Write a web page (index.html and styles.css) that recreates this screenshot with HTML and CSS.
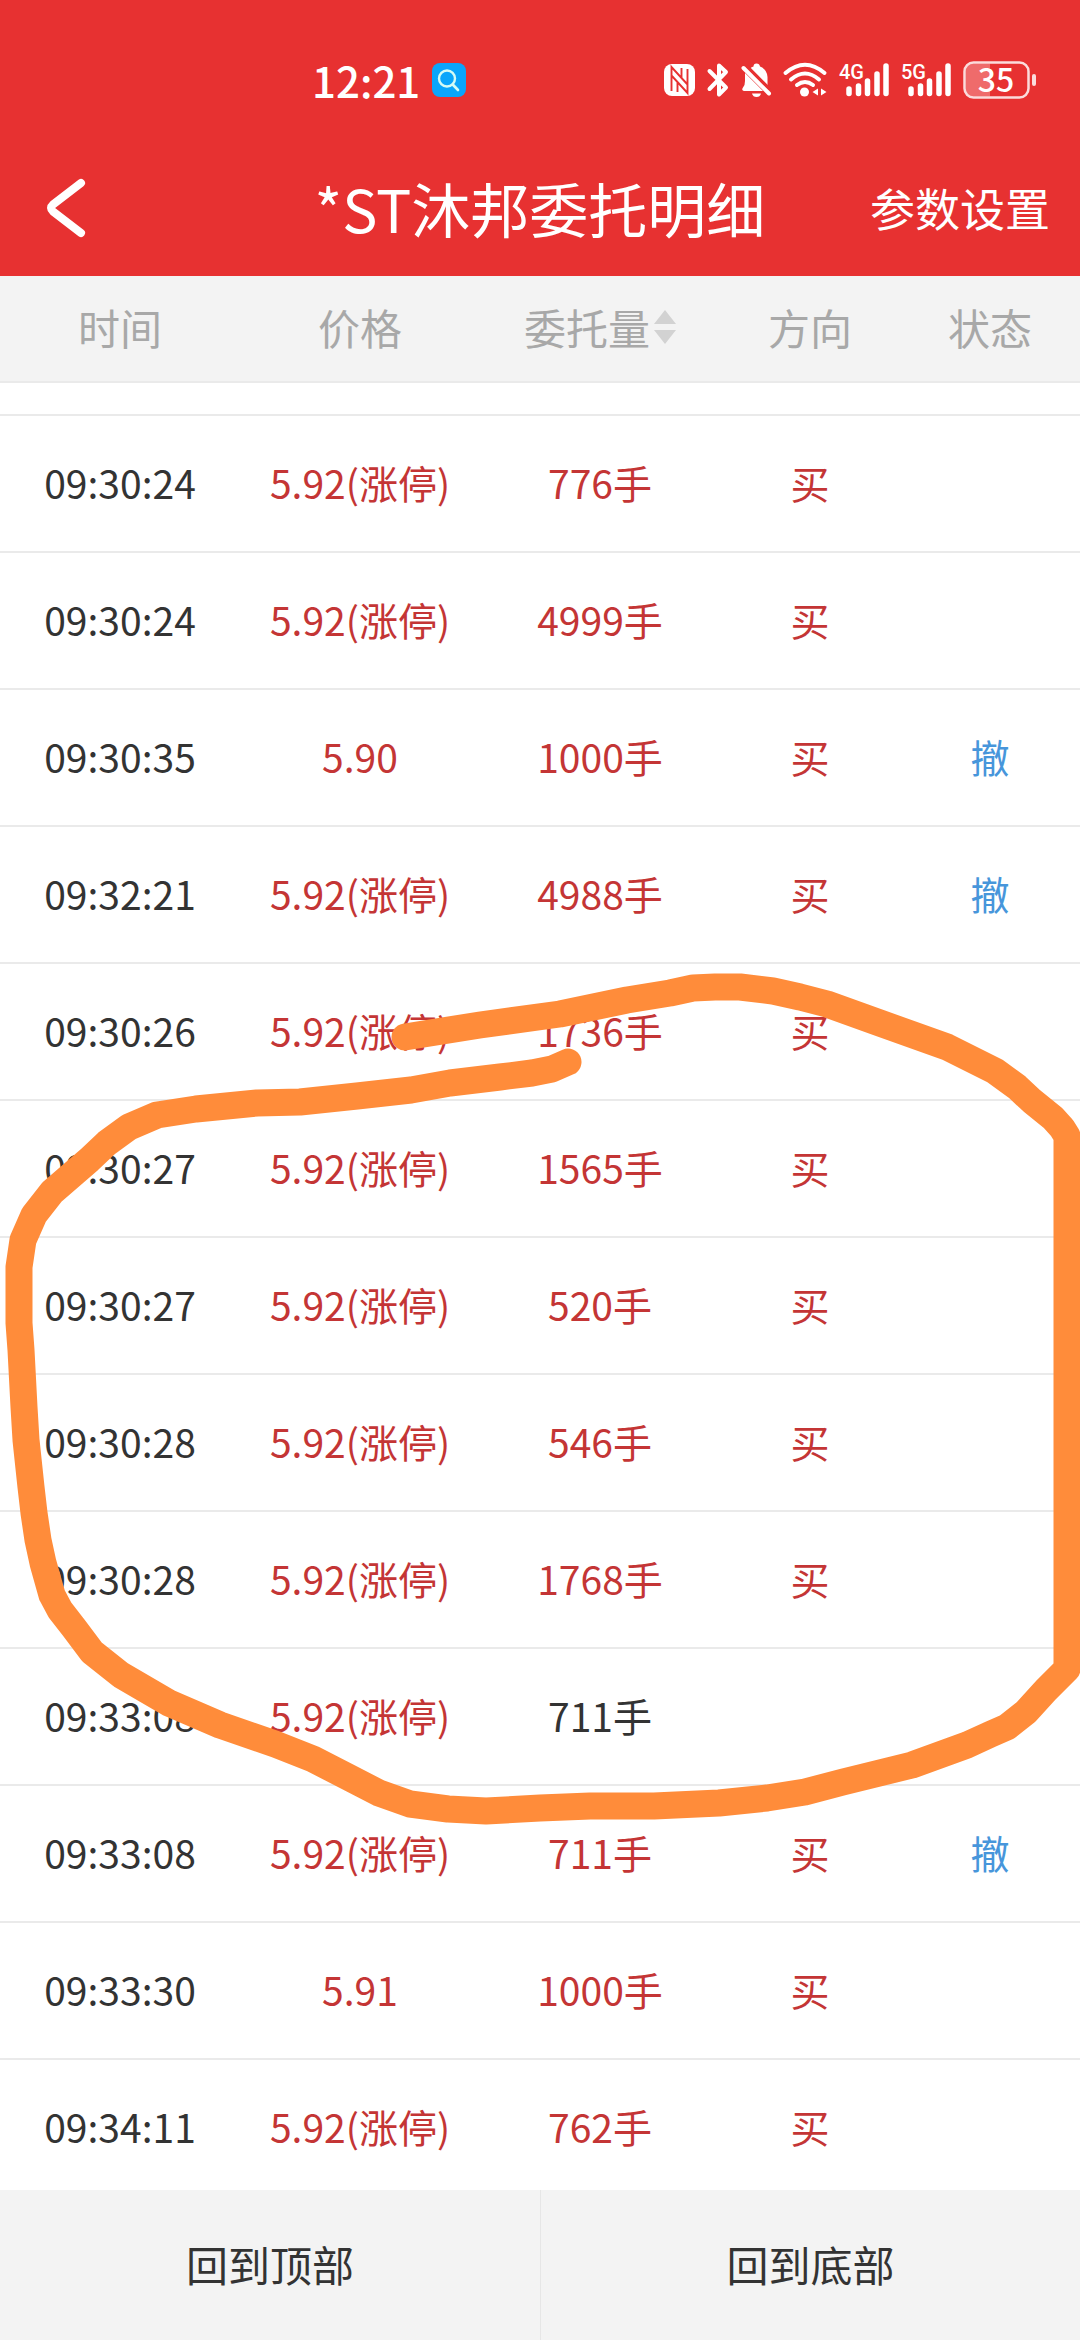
FILE: index.html
```html
<!DOCTYPE html>
<html lang="zh-CN">
<head>
<meta charset="utf-8">
<meta name="viewport" content="width=device-width, initial-scale=1">
<title>*ST沐邦委托明细</title>
<link rel="stylesheet" href="styles.css">
</head>
<body>
<div class="app">
  <header class="header">
    <div class="status">
      <div class="status-left">
        <span class="clock">12:21</span>
        <svg class="icon" width="34" height="34" viewBox="0 0 34 34" aria-hidden="true">
          <rect width="34" height="34" rx="8" fill="#0aa5fb"/>
          <circle cx="15" cy="15.500" r="8" fill="none" stroke="#d5fbf5" stroke-width="2.400"/>
          <path d="M20.700 21.500L26 27" stroke="#d5fbf5" stroke-width="2.600" stroke-linecap="round"/>
        </svg>
      </div>
      <div class="status-right">
        <svg class="icon" width="31" height="36" viewBox="0 0 31 36" aria-hidden="true">
          <rect y="2" width="31" height="32" rx="8" fill="#fff"/>
          <path d="M7.500 29V5L23.500 22.500M23.500 7V31L7.500 13.500M13.500 30V19.500M17.500 6V16.500" fill="none" stroke="#e73131" stroke-width="1.900"/>
        </svg>
        <svg class="icon icon-next" width="22" height="36" viewBox="0 0 22 36" fill="none" stroke="#fff" stroke-width="4" stroke-linecap="round" stroke-linejoin="round" aria-hidden="true">
          <path d="M2.500 9L19 25.500L12 32.500V3.500L19 10L2.500 27"/>
        </svg>
        <svg class="icon icon-next" width="30" height="36" viewBox="0 0 30 36" aria-hidden="true">
          <path d="M9 6.500Q10.500 5 12.500 4.500Q12.500 1.500 15.500 1.500T19 4.500Q26 7 26.500 15V23.500z" fill="#fff"/>
          <path d="M4 11L22 29H3Q0 28 2 25.500Q4 23.500 4 19z" fill="#fff"/>
          <path d="M11 31.500H20Q19 35 15.500 35T11 31.500z" fill="#fff"/>
          <path d="M2.500 6L28 31.500" stroke="#fff" stroke-width="4" stroke-linecap="round"/>
          <path d="M5.500 3.500L29 27" stroke="#e73131" stroke-width="2.500"/>
        </svg>
        <svg class="icon icon-next" width="44" height="36" viewBox="0 0 44 36" fill="none" stroke="#fff" stroke-width="4" stroke-linecap="round" aria-hidden="true">
          <path d="M2.500 11Q22-5.500 41.500 11M8 17.500Q22 5.500 36 17.500M14 23Q22 17 30 23"/>
          <circle cx="21.500" cy="30" r="4.500" fill="#fff" stroke="none"/>
          <path d="M35 26.500V33.500L29.500 30zM38 26.500V33.500L43.500 30z" fill="#fff" stroke="none"/>
        </svg>
        <svg class="icon icon-next" width="50" height="36" viewBox="0 0 50 36">
          <text x="0" y="17" class="net">4G</text>
          <path d="M10 27V31.500M19.500 24V31.500M28.500 19V31.500M38 12V31.500M47 4V31.500" stroke="#fff" stroke-width="5.500" stroke-linecap="round"/>
        </svg>
        <svg class="icon icon-next" width="50" height="36" viewBox="0 0 50 36">
          <text x="0" y="17" class="net">5G</text>
          <path d="M10 27V31.500M19.500 24V31.500M28.500 19V31.500M38 12V31.500M47 4V31.500" stroke="#fff" stroke-width="5.500" stroke-linecap="round"/>
        </svg>
        <svg class="icon icon-next" width="74" height="38" viewBox="0 0 74 38">
          <path d="M27 2.500H11Q2.500 2.500 2.500 11V27Q2.500 35.500 11 35.500H27z" fill="#ef6b6b"/>
          <rect x="1.500" y="1.500" width="64" height="35" rx="9" fill="none" stroke="#fbdcdc" stroke-width="2.500"/>
          <rect x="69" y="13" width="4" height="12" rx="2" fill="#fbdcdc"/>
          <text x="33" y="31" text-anchor="middle" class="charge">35</text>
        </svg>
      </div>
    </div>
    <nav class="nav">
      <button class="back" type="button" aria-label="返回">
        <svg class="icon" width="40" height="60" viewBox="0 0 40 60" fill="none" stroke="#fff" stroke-width="8" stroke-linecap="round" stroke-linejoin="round" aria-hidden="true">
          <path d="M35 5L7 26.500Q3 30 7 33.500L35 55"/>
        </svg>
      </button>
      <h1 class="title">*ST沐邦委托明细</h1>
      <button class="settings" type="button">参数设置</button>
    </nav>
  </header>

  <main class="list">
    <table class="orders">
      <colgroup>
        <col class="wide"><col class="wide"><col class="wide"><col class="narrow"><col class="narrow">
      </colgroup>
      <thead>
        <tr>
          <th scope="col">时间</th>
          <th scope="col">价格</th>
          <th scope="col"><button class="sort" type="button">委托量<svg class="icon" width="22" height="34" viewBox="0 0 22 34" fill="#d2d2d2" aria-hidden="true"><path d="M11 0L22 14H0zM11 34L22 20H0z"/></svg></button></th>
          <th scope="col">方向</th>
          <th scope="col">状态</th>
        </tr>
      </thead>
      <tbody>
        <tr class="partial"><td colspan="5"></td></tr>
        <tr><td>09:30:24</td><td class="up">5.92(涨停)</td><td class="up">776手</td><td class="up">买</td><td></td></tr>
        <tr><td>09:30:24</td><td class="up">5.92(涨停)</td><td class="up">4999手</td><td class="up">买</td><td></td></tr>
        <tr><td>09:30:35</td><td class="up">5.90</td><td class="up">1000手</td><td class="up">买</td><td class="cancel">撤</td></tr>
        <tr><td>09:32:21</td><td class="up">5.92(涨停)</td><td class="up">4988手</td><td class="up">买</td><td class="cancel">撤</td></tr>
        <tr><td>09:30:26</td><td class="up">5.92(涨停)</td><td class="up">1736手</td><td class="up">买</td><td></td></tr>
        <tr><td>09:30:27</td><td class="up">5.92(涨停)</td><td class="up">1565手</td><td class="up">买</td><td></td></tr>
        <tr><td>09:30:27</td><td class="up">5.92(涨停)</td><td class="up">520手</td><td class="up">买</td><td></td></tr>
        <tr><td>09:30:28</td><td class="up">5.92(涨停)</td><td class="up">546手</td><td class="up">买</td><td></td></tr>
        <tr><td>09:30:28</td><td class="up">5.92(涨停)</td><td class="up">1768手</td><td class="up">买</td><td></td></tr>
        <tr><td>09:33:08</td><td class="up">5.92(涨停)</td><td>711手</td><td></td><td></td></tr>
        <tr><td>09:33:08</td><td class="up">5.92(涨停)</td><td class="up">711手</td><td class="up">买</td><td class="cancel">撤</td></tr>
        <tr><td>09:33:30</td><td class="up">5.91</td><td class="up">1000手</td><td class="up">买</td><td></td></tr>
        <tr><td>09:34:11</td><td class="up">5.92(涨停)</td><td class="up">762手</td><td class="up">买</td><td></td></tr>
      </tbody>
    </table>
  </main>

  <footer class="footer">
    <button class="jump" type="button">回到顶部</button>
    <button class="jump" type="button">回到底部</button>
  </footer>

  <!-- hand-drawn marker loop over the rows -->
  <svg class="marker" viewBox="0 0 1080 2340" aria-hidden="true">
    <path d="M405 1037L480 1025L560 1014L627 1000L670 993L693 988L715 987L740 987L773 991L800 997L827 1004L877 1022L947 1047L995 1071L1017 1087L1032 1101L1053 1118L1062 1128L1067 1136V1669L1046 1690L1026 1712L1007 1727L991 1734L967 1745L912 1765L843 1782L805 1792L767 1798L719 1803L654 1806L590 1806L540 1808L486 1811L448 1809L410 1804L379 1793L348 1777L313 1759L275 1744L220 1725L169 1703L121 1675L92 1652L74 1628L60 1610L52 1595L43 1563L38 1540L34 1513L31 1487L26 1440L24 1407L21 1350L19 1323V1267L23 1240L34 1215L52 1192L89 1160L107 1143L129 1127L157 1115L196 1109L257 1103L300 1102L357 1096L411 1090L450 1083L500 1077L532 1073L552 1069L568 1062"/>
  </svg>
</div>
</body>
</html>
```
FILE: styles.css
```css
* {
  box-sizing: border-box;
}

body {
  margin: 0;
  background: #fff;
  color: #333;
  font-family: "Noto Sans CJK SC", "Noto Sans", sans-serif;
  font-size: 39px;
}

button {
  margin: 0;
  padding: 0;
  border: 0;
  background: none;
  color: inherit;
  font: inherit;
}

.icon {
  display: block;
  flex: none;
  overflow: visible;
}

.app {
  position: relative;
  display: flex;
  flex-direction: column;
  height: 100vh;
  overflow: hidden;
}

/* Header */
.header {
  flex: none;
  background: #e73131;
  color: #fff;
}

.status {
  display: flex;
  align-items: center;
  justify-content: space-between;
  height: 142px;
  padding: 18px 43px 0 312px;
}

.status-left,
.status-right {
  display: flex;
  align-items: center;
}

.status-left {
  gap: 12px;
}

.clock {
  font-size: 42px;
  font-weight: 500;
  line-height: 48px;
}

.icon-next {
  margin-left: 12px;
}

.net {
  fill: #fff;
  font-family: Roboto, sans-serif;
  font-size: 20px;
  font-weight: 500;
}

.charge {
  fill: #fff;
  font-size: 32px;
  font-weight: 500;
}

.nav {
  display: grid;
  grid-template-columns: 1fr auto 1fr;
  align-items: center;
  height: 134px;
  padding: 0 30px 2px;
}

.title {
  margin: 0;
  font-size: 59px;
  font-weight: 400;
  line-height: 88px;
}

.back {
  justify-self: start;
  padding-left: 16px;
}

.settings {
  justify-self: end;
  font-size: 45px;
  line-height: 66px;
}

/* Order table */
.list {
  flex: 1;
  min-height: 0;
  overflow: hidden;
}

.orders {
  width: 100%;
  border-collapse: separate;
  border-spacing: 0;
  table-layout: fixed;
}

.wide {
  width: calc(100% * 4 / 18);
}

.narrow {
  width: calc(100% * 3 / 18);
}

.orders th,
.orders td {
  padding: 0 0 3px;
  border-bottom: 2px solid #eaeaea;
  text-align: center;
  white-space: nowrap;
}

.orders th {
  height: 107px;
  background: #f3f3f3;
  color: #a8a8a8;
  font-size: 42px;
  font-weight: 400;
  line-height: 60px;
}

.sort {
  display: inline-flex;
  align-items: center;
  gap: 4px;
  vertical-align: top;
}

.orders td {
  height: 137px;
  line-height: 56px;
}

.orders .partial td {
  height: 33px;
}

.up {
  color: #c43535;
}

.cancel {
  color: #4796db;
}

/* Footer */
.footer {
  display: grid;
  flex: none;
  grid-template-columns: 1fr 1fr;
  height: 150px;
  background: #f3f3f3;
}

.jump {
  padding-bottom: 3px;
  font-size: 42px;
  line-height: 60px;
}

.jump + .jump {
  border-left: 1px solid #e6e6e6;
}

.marker {
  position: absolute;
  top: 0;
  left: 0;
  width: 100%;
  pointer-events: none;
}

.marker path {
  fill: none;
  stroke: #ff8c3a;
  stroke-width: 27px;
  stroke-linecap: round;
  stroke-linejoin: round;
}
```
